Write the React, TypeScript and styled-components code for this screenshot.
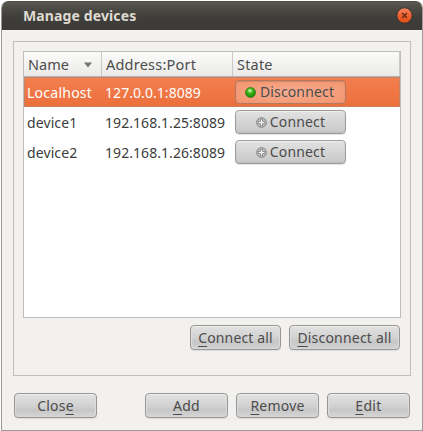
import React from "react";
import styled, { createGlobalStyle, css } from "styled-components";

const Global = createGlobalStyle`
  * { box-sizing: border-box; }
  html, body { margin: 0; padding: 0; background: #fff; }
  body { font: 14px/20px "Noto Sans", "Open Sans", sans-serif; color: #4c4c4c; overflow: hidden; }
  button { font: inherit; color: inherit; margin: 0; padding: 0; cursor: default; }
`;

const Window = styled.main`
  width: 422px;
  height: 430px;
  margin: 1px 0 0 1px;
  display: flex;
  flex-direction: column;
  background: #f2f1f0;
  border: 1px solid #9c9b99;
  border-top: 0;
  border-radius: 7px 7px 0 0;
  overflow: hidden;
`;

const TitleBar = styled.header`
  flex: none;
  height: 29px;
  margin: 0 -1px;
  padding: 0 10px 0 22px;
  display: flex;
  align-items: center;
  justify-content: space-between;
  background: linear-gradient(#45443f 0, #59584f 1px, #4b4a44 8px, #3e3d39 17px, #3c3b37 100%);
  border-radius: 7px 7px 0 0;
`;

const Title = styled.h1`
  margin: 0;
  font-size: 14px;
  line-height: 20px;
  font-weight: 700;
  letter-spacing: 0.12px;
  color: #dfdbd2;
`;

const CloseIcon = styled.svg`
  display: block;
  width: 17px;
  height: 17px;
`;

const Content = styled.div`
  padding: 11px 11px 0;
`;

const Group = styled.section`
  height: 335px;
  border: 1px solid #bfbebc;
  padding: 9px;
`;

const Table = styled.div`
  height: 267px;
  border: 1px solid #bfbebc;
  background: #fff;
`;

const columns = css`
  display: grid;
  grid-template-columns: 78px 131px 1fr;
`;

const HeaderRow = styled.div`
  ${columns}
  height: 25px;
  background: linear-gradient(#fbfbfa, #ebeae9);
  border-bottom: 1px solid #b5b3b0;
`;

const HeaderCell = styled.div<{ $track?: number }>`
  display: flex;
  align-items: center;
  justify-content: space-between;
  padding: 0 9px 0 4px;
  border-right: 1px solid #cbc9c7;
  font-size: 14.5px;
  letter-spacing: ${(p) => p.$track ?? 0}px;
`;

const SortArrow = styled.svg`
  width: 8px;
  height: 6px;
  margin-top: 2px;
`;

const Row = styled.div<{ $selected?: boolean }>`
  ${columns}
  height: 30px;
  align-items: center;
  color: ${(p) => (p.$selected ? "#fff" : "#3c3c3c")};
  ${(p) =>
    p.$selected &&
    css`
      background: linear-gradient(#f37f50, #ec6f3b);
      outline: 1px dotted #a08c7b;
      outline-offset: -1px;
    `}
`;

const Cell = styled.div<{ $track?: number }>`
  padding: 2px 0 0 3px;
  white-space: nowrap;
  letter-spacing: ${(p) => p.$track ?? 0}px;
`;

const StateButton = styled.button<{ $active?: boolean }>`
  width: 111px;
  height: 24px;
  margin-left: 2px;
  padding-right: ${(p) => (p.$active ? 2 : 0)}px;
  display: flex;
  align-items: center;
  justify-content: center;
  gap: ${(p) => (p.$active ? 4 : 3)}px;
  border: 1px solid ${(p) => (p.$active ? "#b27861" : "#9d9d9d")};
  border-radius: 4px;
  color: #4c4c4c;
  letter-spacing: 0.15px;
  background: ${(p) =>
    p.$active
      ? "radial-gradient(ellipse at center, #f5ac90, #f3946d)"
      : "linear-gradient(#e2e2e2, #d3d3d3 55%, #c9c9c9)"};
  box-shadow: ${(p) =>
    p.$active ? "inset 0 1px 1px #d98460" : "inset 0 1px 0 #eee, inset 0 -1px 1px #bbb, 0 1px 1px #e4e4e4"};
`;

const StateIcon = styled.svg`
  flex: none;
  width: 11px;
  height: 11px;
`;

const Actions = styled.div<{ $footer?: boolean }>`
  display: flex;
  justify-content: flex-end;
  gap: 8px;
  padding: ${(p) => (p.$footer ? "17px 12px 0" : "7px 1px 0 0")};
`;

const Button = styled.button<{ $width: number; $track?: number; $start?: boolean }>`
  width: ${(p) => p.$width}px;
  height: 25px;
  margin-right: ${(p) => (p.$start ? "auto" : "0")};
  white-space: nowrap;
  letter-spacing: ${(p) => p.$track ?? 0}px;
  border: 1px solid #989794;
  border-radius: 4px;
  background: linear-gradient(#e2e2e2, #d2d2d2 50%, #c7c7c7 70%, #d5d5d5);
  box-shadow: inset 0 1px 0 #efefef, inset 1px 0 1px #ddd, inset -1px 0 1px #ddd, 0 1px 1px #dddcdb;
`;

const Mnemonic = styled.span`
  text-decoration: underline;
  text-decoration-thickness: 1px;
  text-underline-offset: 3px;
  text-decoration-skip-ink: none;
`;

const ConnectedIcon = () => (
  <StateIcon viewBox="0 0 12 12">
    <defs>
      <radialGradient id="led" cx=".45" cy=".35" r=".65">
        <stop offset="0" stopColor="#a4ed7c" />
        <stop offset=".4" stopColor="#40b41b" />
        <stop offset="1" stopColor="#148305" />
      </radialGradient>
    </defs>
    <circle cx="6" cy="6" r="5.5" fill="url(#led)" stroke="#2a790d" strokeWidth=".7" />
    <ellipse cx="5.5" cy="3.8" rx="2.5" ry="1.4" fill="#d3f8ba" opacity=".55" />
  </StateIcon>
);

const DisconnectedIcon = () => (
  <StateIcon viewBox="0 0 11 11">
    <circle cx="5.5" cy="5.5" r="4.8" fill="#c4c4c4" stroke="#7d7d7d" />
    <path d="M5.5 2v7M2 5.5h7" stroke="#777" strokeWidth="3" />
    <path d="M5.5 2.5v6M2.5 5.5h6" stroke="#f4f4f4" strokeWidth="1.4" />
  </StateIcon>
);

const devices = [
  { name: "Localhost", address: "127.0.0.1:8089", connected: true, nameTrack: 0.25 },
  { name: "device1", address: "192.168.1.25:8089", connected: false, nameTrack: 0.1 },
  { name: "device2", address: "192.168.1.26:8089", connected: false, nameTrack: 0.1 },
];

export default function App() {
  return (
    <>
      <Global />
      <Window>
        <TitleBar>
          <Title>Manage devices</Title>
          <CloseIcon viewBox="0 0 17 17" role="img" aria-label="Close window">
            <defs>
              <linearGradient id="close" x2="0" y2="1">
                <stop offset="0" stopColor="#f58a64" />
                <stop offset=".5" stopColor="#ee6030" />
                <stop offset="1" stopColor="#e24f13" />
              </linearGradient>
            </defs>
            <circle cx="8.5" cy="8.5" r="7.7" fill="url(#close)" stroke="#34332f" />
            <path d="m6 6 5 5m0-5-5 5" stroke="#5e2a17" strokeWidth="1.2" />
          </CloseIcon>
        </TitleBar>
        <Content>
          <Group>
            <Table>
              <HeaderRow>
                <HeaderCell>
                  Name
                  <SortArrow viewBox="0 0 8 6">
                    <path d="M0 .5h8L4 5.5Z" fill="#777572" />
                  </SortArrow>
                </HeaderCell>
                <HeaderCell $track={0.22}>Address:Port</HeaderCell>
                <HeaderCell $track={0.2}>State</HeaderCell>
              </HeaderRow>
              {devices.map((d) => (
                <Row key={d.name} $selected={d.connected}>
                  <Cell $track={d.nameTrack}>{d.name}</Cell>
                  <Cell $track={0.06}>{d.address}</Cell>
                  <StateButton $active={d.connected}>
                    {d.connected ? <ConnectedIcon /> : <DisconnectedIcon />}
                    {d.connected ? "Disconnect" : "Connect"}
                  </StateButton>
                </Row>
              ))}
            </Table>
            <Actions>
              <Button $width={91} $track={0.15}><Mnemonic>C</Mnemonic>onnect all</Button>
              <Button $width={111} $track={0.2}><Mnemonic>D</Mnemonic>isconnect all</Button>
            </Actions>
          </Group>
        </Content>
        <Actions $footer>
          <Button $width={83} $track={0.2} $start>Clos<Mnemonic>e</Mnemonic></Button>
          <Button $width={83} $track={0.3}><Mnemonic>A</Mnemonic>dd</Button>
          <Button $width={83} $track={0.2}><Mnemonic>R</Mnemonic>emove</Button>
          <Button $width={83} $track={0.3}><Mnemonic>E</Mnemonic>dit</Button>
        </Actions>
      </Window>
    </>
  );
}
